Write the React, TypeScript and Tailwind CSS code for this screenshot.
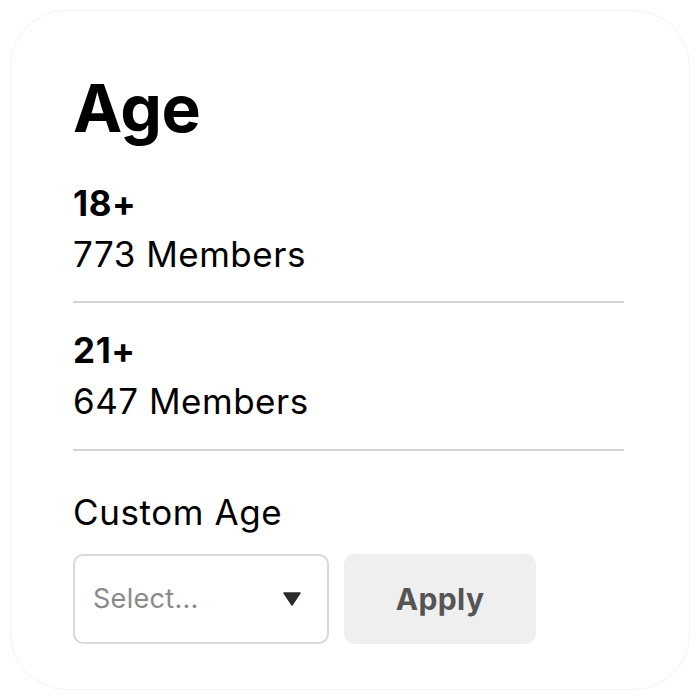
import { useState } from "react";

const options = [
  { label: "18+", members: 773 },
  { label: "21+", members: 647 },
];

export default function App() {
  const [age, setAge] = useState("");

  return (
    <div className="w-[700px] h-[700px] bg-white p-[10px]" style={{ fontFamily: "Inter, 'Noto Sans', sans-serif" }}>
      <div className="h-full rounded-[56px] border border-[#f3f3f3] bg-white pl-[62px] pr-[65px] pt-[64px] text-black">
        <h1 className="text-[66px] leading-[66px] font-bold tracking-[-0.5px]">Age</h1>

        <div className="mt-[42px]">
          {options.map((o, i) => (
            <div key={o.label}>
              <div className={i === 0 ? "pb-[27px]" : "pt-[27px] pb-[28px]"}>
                <div className="text-[35px] leading-[40px] font-bold tracking-[0.6px]">{o.label}</div>
                <div className="mt-[11px] text-[35px] leading-[40px] tracking-[0.5px]">{o.members} Members</div>
              </div>
              <div className="h-[2px] bg-[#d6d6d6]" />
            </div>
          ))}
        </div>

        <div className="mt-[41px] text-[35px] leading-[40px] tracking-[0.6px]">Custom Age</div>

        <div className="mt-[22px] flex gap-[15px]">
          <label className="relative flex h-[90px] w-[256px] items-center rounded-[10px] border-2 border-[#d9d9d9] bg-white pl-[18px] pr-[26px]">
            <select
              value={age}
              onChange={(e) => setAge(e.target.value)}
              className="absolute inset-0 opacity-0"
            >
              <option value="">Select...</option>
              {Array.from({ length: 83 }, (_, k) => k + 18).map((n) => (
                <option key={n} value={n}>
                  {n}+
                </option>
              ))}
            </select>
            <span className="flex-1 text-[27px] tracking-[0.3px] text-[#8a8a8a]">{age ? `${age}+` : "Select..."}</span>
            <svg width="18" height="14" viewBox="0 0 18 14" className="pointer-events-none">
              <path d="M1 1 H17 L9 13 Z" fill="#2b2b2b" strokeLinejoin="round" stroke="#2b2b2b" strokeWidth="1.5" />
            </svg>
          </label>
          <button className="h-[90px] w-[192px] rounded-[10px] bg-[#efefef] text-[30px] font-bold tracking-[0.4px] text-[#555555]">
            Apply
          </button>
        </div>
      </div>
    </div>
  );
}
